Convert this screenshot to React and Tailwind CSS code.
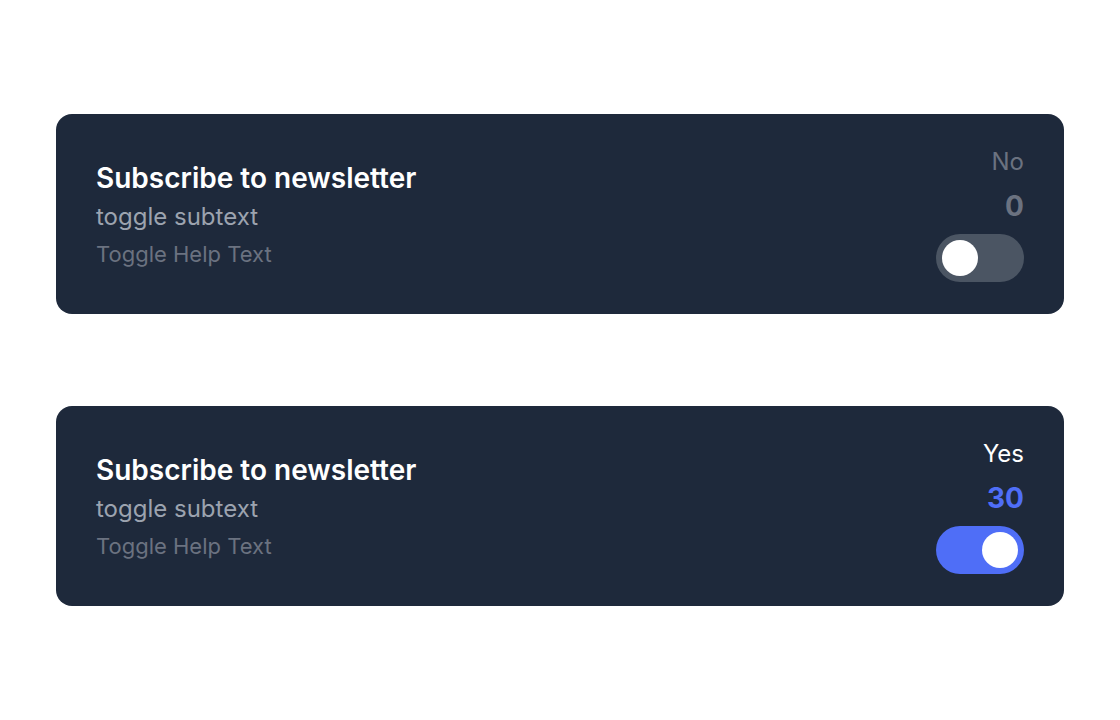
import { useState } from "react";

const ToggleCard = ({ initial, count }) => {
  const [on, setOn] = useState(initial);

  return (
    <div className="flex items-center justify-between rounded-2xl bg-[#1e293b] px-10 h-[200px]">
      <div className="flex flex-col">
        <div className="text-[28px] font-semibold leading-[36px] text-white">
          Subscribe to newsletter
        </div>
        <div className="mt-[5px] text-[24px] leading-[32px] text-[#9ca3af]">
          toggle subtext
        </div>
        <div className="mt-[6px] text-[22px] leading-[30px] text-[#6b7280]">
          Toggle Help Text
        </div>
      </div>
      <div className="flex flex-col items-end">
        <div className={`text-[24px] leading-[30px] ${on ? "text-white" : "text-[#6b7280]"}`}>
          {on ? "Yes" : "No"}
        </div>
        <div
          className={`mt-[12px] text-[28px] font-bold leading-[34px] ${
            on ? "text-[#4f6ef7]" : "text-[#6b7280]"
          }`}
        >
          {count}
        </div>
        <button
          type="button"
          onClick={() => setOn(!on)}
          className={`mt-[11px] flex h-[48px] w-[88px] items-center rounded-full px-[6px] ${
            on ? "bg-[#4f6ef7] justify-end" : "bg-[#4b5563] justify-start"
          }`}
        >
          <span className="block h-[36px] w-[36px] rounded-full bg-white"></span>
        </button>
      </div>
    </div>
  );
};

export default function App() {
  return (
    <div
      className="min-h-[720px] bg-white px-14 pt-[114px] flex flex-col gap-[92px]"
      style={{ fontFamily: "Inter, 'Noto Sans', sans-serif" }}
    >
      <ToggleCard initial={false} count={0} />
      <ToggleCard initial={true} count={30} />
    </div>
  );
}
